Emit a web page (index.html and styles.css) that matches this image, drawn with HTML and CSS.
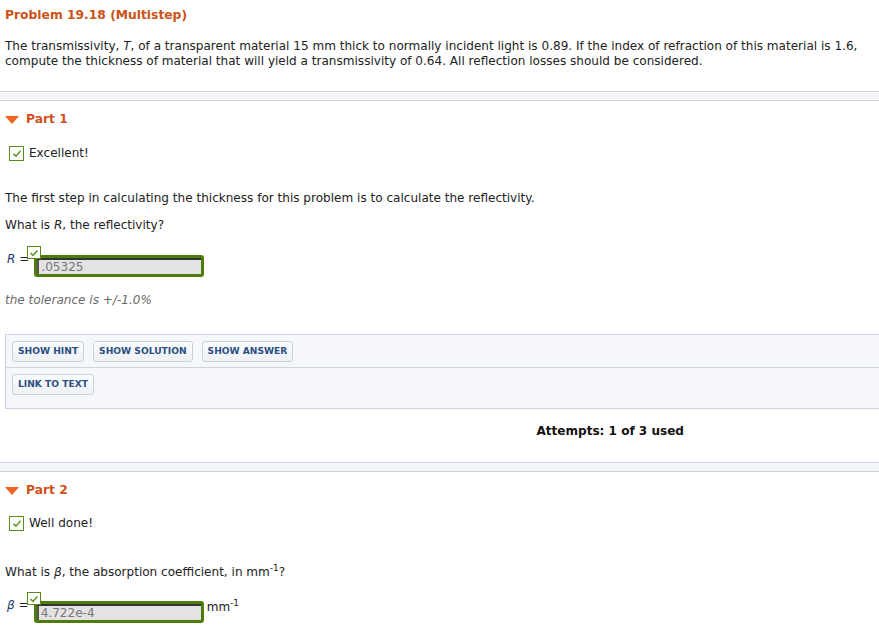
FILE: index.html
```html
<!DOCTYPE html>
<html>
<head>
<meta charset="utf-8">
<link rel="stylesheet" href="styles.css">
</head>
<body>
<div class="page">
  <h1 class="title">Problem 19.18 (Multistep)</h1>
  <p class="intro">The transmissivity, <i>T</i>, of a transparent material 15 mm thick to normally incident light is 0.89. If the index of refraction of this material is 1.6, compute the thickness of material that will yield a transmissivity of 0.64. All reflection losses should be considered.</p>
  <div class="divider"></div>

  <section class="part part1">
    <h2 class="part-title"><span class="tri"></span>Part 1</h2>
    <div class="feedback"><span class="chk"><svg width="10" height="9" viewBox="0 0 10 9"><path d="M1.5 4.8 L4 7.2 L8.6 1.8" fill="none" stroke="#5f9a2a" stroke-width="1.6"/></svg></span>Excellent!</div>
    <p class="q q-first">The first step in calculating the thickness for this problem is to calculate the reflectivity.</p>
    <p class="q">What is <i>R</i>, the reflectivity?</p>
    <div class="answer-row">
      <span class="var"><i>R</i> =</span>
      <span class="field">
        <span class="mini-chk"><svg width="10" height="8" viewBox="0 0 10 8"><path d="M1.5 4 L4 6.3 L8.5 1.5" fill="none" stroke="#5f9a2a" stroke-width="1.6"/></svg></span>
        <span class="input">.05325</span>
      </span>
    </div>
    <p class="tol">the tolerance is +/-1.0%</p>
    <div class="hintbox">
      <div class="hint-row"><span class="btn">SHOW HINT</span><span class="btn">SHOW SOLUTION</span><span class="btn">SHOW ANSWER</span></div>
      <div class="hint-row hint-row2"><span class="btn">LINK TO TEXT</span></div>
    </div>
    <div class="attempts-row"><span class="attempts">Attempts: 1 of 3 used</span></div>
  </section>
  <div class="divider divider2"></div>

  <section class="part part2">
    <h2 class="part-title"><span class="tri"></span>Part 2</h2>
    <div class="feedback"><span class="chk"><svg width="10" height="9" viewBox="0 0 10 9"><path d="M1.5 4.8 L4 7.2 L8.6 1.8" fill="none" stroke="#5f9a2a" stroke-width="1.6"/></svg></span>Well done!</div>
    <p class="q q-first2">What is <i>β</i>, the absorption coefficient, in mm<sup>-1</sup>?</p>
    <div class="answer-row">
      <span class="var"><i>β</i> =</span>
      <span class="field">
        <span class="mini-chk"><svg width="10" height="8" viewBox="0 0 10 8"><path d="M1.5 4 L4 6.3 L8.5 1.5" fill="none" stroke="#5f9a2a" stroke-width="1.6"/></svg></span>
        <span class="input">4.722e-4</span>
      </span>
      <span class="unit">mm<sup>-1</sup></span>
    </div>
  </section>
</div>
</body>
</html>
```
FILE: styles.css
```css
html, body {
  margin: 0;
  padding: 0;
  background: #fff;
}
body {
  font-family: "DejaVu Sans", Verdana, sans-serif;
  font-size: 12.05px;
  color: #222;
  overflow: hidden;
}
.page {
  width: 879px;
}
.title {
  margin: 0;
  padding: 8px 0 0 5px;
  font-size: 12.3px;
  font-weight: bold;
  color: #cc5216;
  line-height: 15px;
}
.intro {
  margin: 16px 0 0 5px;
  padding-right: 8px;
  line-height: 15px;
}
.divider {
  margin-top: 22px;
  height: 8px;
  background: #f4f6fa;
  border-top: 1px solid #ccd2de;
  border-bottom: 1px solid #ccd2de;
}
.divider2 {
  margin-top: 23px;
}
.part-title {
  margin: 0;
  display: flex;
  align-items: center;
  font-size: 12.3px;
  font-weight: bold;
  color: #d1501c;
  line-height: 15px;
  padding-left: 5px;
}
.part1 .part-title { margin-top: 11px; }
.part2 .part-title { margin-top: 11px; }
.tri {
  width: 0;
  height: 0;
  border-left: 7px solid transparent;
  border-right: 7px solid transparent;
  border-top: 8px solid #f0641e;
  margin-right: 7px;
  margin-top: 1px;
}
.feedback {
  display: flex;
  align-items: center;
  margin: 19px 0 0 9px;
  line-height: 15px;
}
.part2 .feedback { margin-top: 18px; }
.chk {
  width: 13px;
  height: 13px;
  border: 1px solid #5a8a1a;
  background: #fff;
  margin-right: 5px;
  display: flex;
  align-items: center;
  justify-content: center;
}
.q {
  margin: 12px 0 0 5px;
  line-height: 15px;
}
.q-first { margin-top: 30px; }
.q-first2 { margin-top: 34px; }
.answer-row {
  display: flex;
  align-items: flex-start;
  margin: 13px 0 0 7px;
}
.part2 .answer-row { margin-top: 12px; }
.var {
  line-height: 15px;
  margin-top: 6px;
  margin-right: 5px;
  color: #222;
}
.var i { color: #1a3a6a; }
.field {
  position: relative;
  padding-top: 9px;
}
.mini-chk {
  position: absolute;
  left: -7px;
  top: 0;
  width: 12px;
  height: 11px;
  border: 1px solid #5a8a1a;
  background: #fff;
  display: flex;
  align-items: center;
  justify-content: center;
  z-index: 2;
}
.input {
  display: block;
  box-sizing: border-box;
  width: 170px;
  height: 22px;
  line-height: 17px;
  background: #e3e3e3;
  border: 3px solid #4e7d0c;
  border-radius: 3px;
  box-shadow: inset 0 2px 0 #333, inset 2px 0 0 #555;
  color: #777;
  padding-left: 4px;
  padding-top: 1px;
  font-size: 12.05px;
}
.unit {
  margin-left: 3px;
  margin-top: 8px;
  line-height: 15px;
}
sup {
  font-size: 9px;
  vertical-align: 5px;
  line-height: 0;
}
.tol {
  margin: 16px 0 0 5px;
  font-style: italic;
  color: #6a6a6a;
  line-height: 15px;
}
.hintbox {
  margin: 26px 0 0 5px;
  background: #f5f7fa;
  border: 1px solid #cdd3df;
  border-right: none;
}
.hint-row {
  display: flex;
  gap: 9px;
  padding: 6px 6px 5px;
  border-bottom: 1px solid #cdd3df;
}
.hint-row2 {
  border-bottom: none;
  padding-bottom: 13px;
}
.btn {
  font-size: 9.15px;
  font-weight: bold;
  color: #2b4f84;
  background: linear-gradient(#fbfcfd, #eef1f5);
  border: 1px solid #cbd1db;
  border-radius: 3px;
  padding: 0 5px;
  line-height: 19px;
  height: 19px;
}
.attempts-row {
  display: flex;
  justify-content: flex-end;
  padding-right: 195px;
  margin-top: 15px;
}
.attempts {
  font-weight: bold;
  color: #111;
  line-height: 15px;
}
```
